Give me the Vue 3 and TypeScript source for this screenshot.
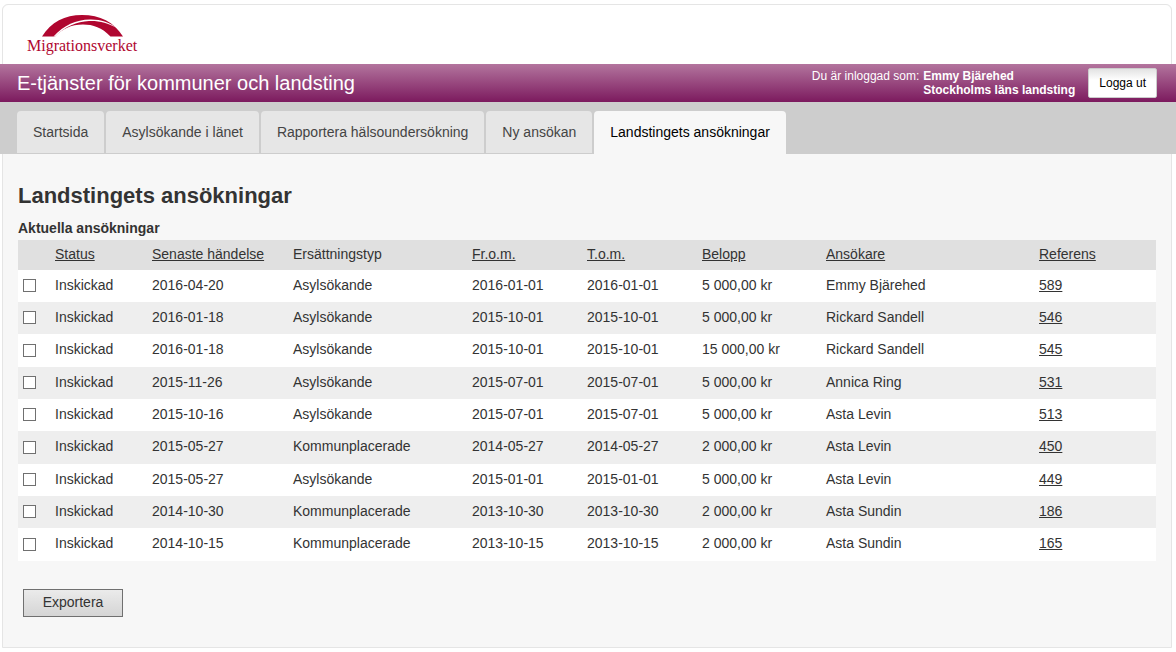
<script setup lang="ts">
import { ref } from 'vue'

interface Application {
  date: string
  type: string
  from: string
  to: string
  amount: string
  applicant: string
  reference: string
}

interface Column {
  key: string
  label: string
  sortable: boolean
}

const tabs: string[] = [
  'Startsida',
  'Asylsökande i länet',
  'Rapportera hälsoundersökning',
  'Ny ansökan',
  'Landstingets ansökningar',
]
const activeTab = ref(4)

const columns: Column[] = [
  { key: 'status', label: 'Status', sortable: true },
  { key: 'date', label: 'Senaste händelse', sortable: true },
  { key: 'type', label: 'Ersättningstyp', sortable: false },
  { key: 'from', label: 'Fr.o.m.', sortable: true },
  { key: 'to', label: 'T.o.m.', sortable: true },
  { key: 'amount', label: 'Belopp', sortable: true },
  { key: 'applicant', label: 'Ansökare', sortable: true },
  { key: 'reference', label: 'Referens', sortable: true },
]

const row = (
  date: string,
  type: string,
  from: string,
  to: string,
  amount: string,
  applicant: string,
  reference: string,
): Application => ({ date, type, from, to, amount, applicant, reference })

const applications: Application[] = [
  row('2016-04-20', 'Asylsökande', '2016-01-01', '2016-01-01', '5 000,00 kr', 'Emmy Bjärehed', '589'),
  row('2016-01-18', 'Asylsökande', '2015-10-01', '2015-10-01', '5 000,00 kr', 'Rickard Sandell', '546'),
  row('2016-01-18', 'Asylsökande', '2015-10-01', '2015-10-01', '15 000,00 kr', 'Rickard Sandell', '545'),
  row('2015-11-26', 'Asylsökande', '2015-07-01', '2015-07-01', '5 000,00 kr', 'Annica Ring', '531'),
  row('2015-10-16', 'Asylsökande', '2015-07-01', '2015-07-01', '5 000,00 kr', 'Asta Levin', '513'),
  row('2015-05-27', 'Kommunplacerade', '2014-05-27', '2014-05-27', '2 000,00 kr', 'Asta Levin', '450'),
  row('2015-05-27', 'Asylsökande', '2015-01-01', '2015-01-01', '5 000,00 kr', 'Asta Levin', '449'),
  row('2014-10-30', 'Kommunplacerade', '2013-10-30', '2013-10-30', '2 000,00 kr', 'Asta Sundin', '186'),
  row('2014-10-15', 'Kommunplacerade', '2013-10-15', '2013-10-15', '2 000,00 kr', 'Asta Sundin', '165'),
]
const selected = ref<string[]>([])
</script>

<template>
  <div class="page">
    <header class="brand">
      <svg class="arch" viewBox="0 0 82 22" width="82" height="22" aria-hidden="true">
        <path fill="#b0062f" d="M0 21.500C9 7 23 0 40 0C58 0 72 7 81 21.500H68.500C60 12.500 51 9.500 41 9.500C29 9.500 20 14 13 21.500Z" />
        <path fill="#fff" d="M11.500 21.500C22 10 34 4.800 48 4.500C59 4.300 68 7.500 74.500 13C66 7.800 57 5.600 47 6C35 6.600 23 11.500 13 21.500Z" />
      </svg>
      <span class="wordmark">Migrationsverket</span>
    </header>

    <div class="banner">
      <div class="service">E-tjänster för kommuner och landsting</div>
      <div class="session">
        <span>Du är inloggad som:</span>
        <strong>Emmy Bjärehed<br />Stockholms läns landsting</strong>
      </div>
      <button type="button" class="logout">Logga ut</button>
    </div>

    <nav class="tabs">
      <a
        v-for="(tab, i) in tabs"
        :key="tab"
        href="#"
        class="tab"
        :class="{ active: i === activeTab }"
        @click.prevent="activeTab = i"
      >{{ tab }}</a>
    </nav>

    <main class="content">
      <h1>Landstingets ansökningar</h1>
      <table>
        <caption>Aktuella ansökningar</caption>
        <colgroup>
          <col class="c-check" />
          <col v-for="c in columns" :key="c.key" :class="'c-' + c.key" />
        </colgroup>
        <thead>
          <tr>
            <td></td>
            <th v-for="c in columns" :key="c.key" scope="col">
              <a v-if="c.sortable" href="#" @click.prevent>{{ c.label }}</a>
              <template v-else>{{ c.label }}</template>
            </th>
          </tr>
        </thead>
        <tbody>
          <tr v-for="a in applications" :key="a.reference">
            <td>
              <input v-model="selected" type="checkbox" :value="a.reference" :aria-label="'Välj ansökan ' + a.reference" />
            </td>
            <td>Inskickad</td>
            <td>{{ a.date }}</td>
            <td>{{ a.type }}</td>
            <td>{{ a.from }}</td>
            <td>{{ a.to }}</td>
            <td>{{ a.amount }}</td>
            <td>{{ a.applicant }}</td>
            <td><a href="#" @click.prevent>{{ a.reference }}</a></td>
          </tr>
        </tbody>
      </table>
      <button type="button" class="export">Exportera</button>
    </main>
  </div>
</template>

<style>
body {
  background: #fff;
}
</style>

<style scoped>
.page {
  margin: 4px 4px 4px 2px;
  border: 1px solid #e5e5e5;
  border-radius: 6px 6px 0 0;
  background: #f7f7f7;
  color: #333;
  font: 14px/18px "Liberation Sans", Arial, sans-serif;
}

.brand {
  display: flex;
  flex-direction: column;
  align-items: flex-start;
  height: 59px;
  box-sizing: border-box;
  padding: 10px 24px 0;
  border-radius: 6px 6px 0 0;
  background: #fff;
}

.arch {
  margin-left: 15px;
}

.wordmark {
  color: #b0062f;
  font: 16px/18px "Liberation Serif", "Times New Roman", serif;
}

.banner {
  display: flex;
  align-items: center;
  height: 38px;
  margin: 0 -5px 0 -3px;
  padding: 0 19px 0 17px;
  background: linear-gradient(#b3759e, #7c1a5e);
  color: #fff;
}

.service {
  flex: 1;
  font-size: 20px;
  line-height: 24px;
}

.session {
  display: flex;
  gap: 4px;
  margin-right: 13px;
  font-size: 12px;
  line-height: 14px;
}

.logout {
  height: 30px;
  padding: 0 10px;
  border: 1px solid #ccc;
  border-radius: 2px;
  background: linear-gradient(#e3e3e3, #fff 40%);
  color: #000;
  font: 12px/14px "Liberation Sans", Arial, sans-serif;
}

.tabs {
  display: flex;
  gap: 2px;
  height: 52px;
  box-sizing: border-box;
  margin: 0 -5px 0 -3px;
  padding: 9px 17px 0;
  background: #cdcdcd;
}

.tab {
  height: 42px;
  padding: 0 16px;
  border-radius: 4px 4px 0 0;
  background: #e6e6e6;
  color: #444;
  line-height: 42px;
  text-decoration: none;
}

.tab.active {
  height: 43px;
  background: #f7f7f7;
  color: #000;
}

.content {
  padding: 29px 15px 30px;
}

h1 {
  margin: 0 0 9px;
  font-size: 22px;
  line-height: 26px;
}

table {
  width: 100%;
  border-collapse: collapse;
  table-layout: fixed;
}

caption {
  height: 22px;
  font-weight: bold;
  line-height: 20px;
  text-align: left;
}

.c-check { width: 32px; }
.c-status { width: 97px; }
.c-date { width: 141px; }
.c-type { width: 179px; }
.c-from,
.c-to { width: 115px; }
.c-amount { width: 124px; }
.c-applicant { width: 213px; }
.c-reference { width: 122px; }

th,
td {
  padding: 0 5px 2px;
  font-weight: normal;
  text-align: left;
  vertical-align: middle;
}

tbody td {
  padding-bottom: 3px;
}

th a,
td a {
  color: inherit;
}

thead tr {
  height: 30px;
  background: #e0e0e0;
}

tbody tr {
  height: 32px;
  background: #fff;
}

tbody tr:nth-child(3n) {
  height: 33px;
}

tbody tr:nth-child(even) {
  background: #eee;
}

input {
  display: block;
  width: 13px;
  height: 13px;
  margin: 2px 0 0;
  border: 1px solid #707070;
  background: #fff;
  appearance: none;
}

input:checked {
  background: #707070;
  box-shadow: inset 0 0 0 2px #fff;
}

.export {
  display: block;
  width: 100px;
  height: 28px;
  margin: 28px 5px 0;
  padding: 0 0 2px;
  border: 1px solid #707070;
  background: linear-gradient(#ebebeb, #d5d5d5);
  color: #333;
  font: inherit;
}
</style>
